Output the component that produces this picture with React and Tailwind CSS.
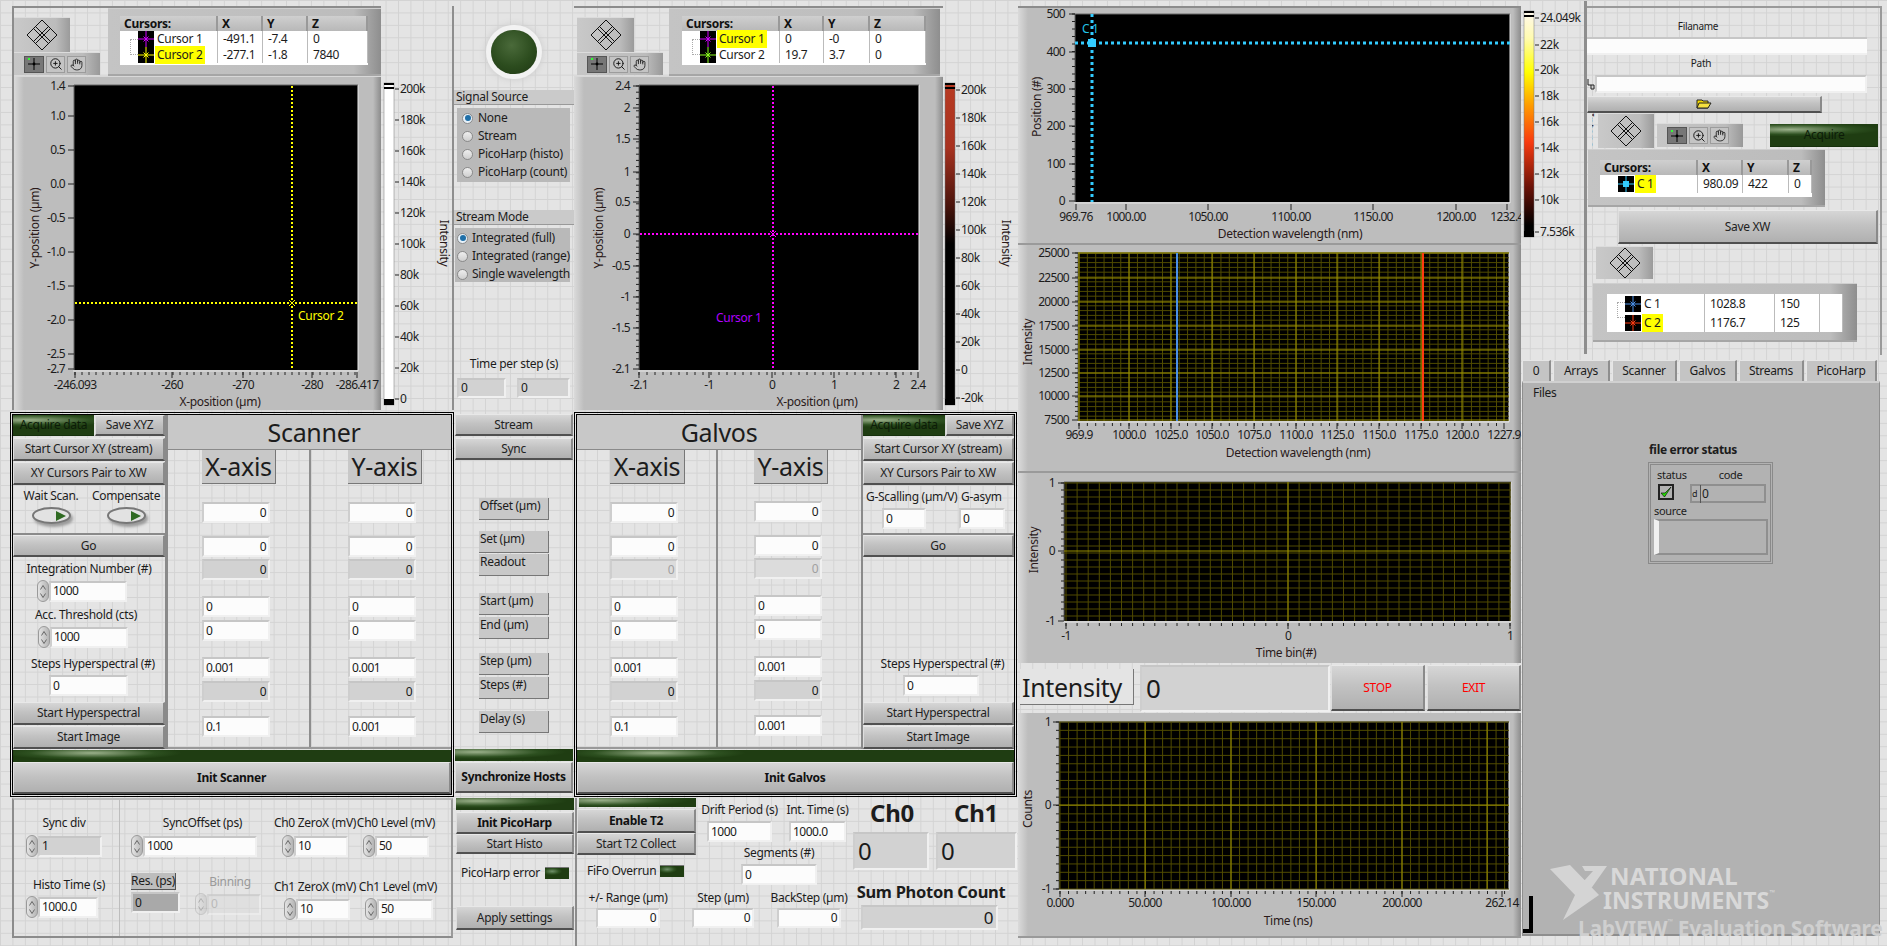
import React from "react";
import { ZoomIn, Hand } from "lucide-react";

const gridBg =
  "bg-[#e4e4e4] bg-[linear-gradient(#d3d3d3_1px,transparent_1px),linear-gradient(90deg,#d3d3d3_1px,transparent_1px)] bg-[size:12.45px_12.45px]";
const paneBg =
  "bg-[linear-gradient(90deg,#dadada,#bdbdbd_10px,#bdbdbd_calc(100%-8px),#8c8c8c)]";
const greenBar =
  "bg-[radial-gradient(ellipse_90px_7px_at_18%_25%,#9ab08a,#2d5020_70%,#1f3d12)]";

const range = (a, b, step) => {
  const out = [];
  for (let v = a; v <= b + 0.01; v += step) out.push(v);
  return out;
};

function Btn({ className = "", children, bold, red }) {
  return (
    <div
      className={`flex items-center justify-center whitespace-nowrap bg-[linear-gradient(#d6d6d6,#c2c2c2_45%,#b0b0b0)] border-t border-t-[#e8e8e8] border-l border-l-[#dedede] border-r-2 border-r-[#8a8a8a] border-b-2 border-b-[#505050] ${
        bold ? "font-bold text-[#111]" : "text-[#222]"
      } ${red ? "text-[#ff0000]" : ""} ${className}`}
    >
      {children}
    </div>
  );
}

function GreenBtn({ className = "", children }) {
  return (
    <div
      className={`flex items-center justify-center ${greenBar} border-b border-[#16300c] text-[#0c1c08] ${className}`}
    >
      {children}
    </div>
  );
}

function Field({ className = "", value, right, kind = "white" }) {
  const tone = {
    white: "bg-[#fcfcfc] text-[#1a1a1a]",
    gray: "bg-[#d2d2d2] text-[#1a1a1a]",
    dim: "bg-[#dcdcdc] text-[#a0a0a0]",
    dark: "bg-[#a9a9a9] text-[#1a1a1a]",
  }[kind];
  // default height only when the caller did not pass one
  const height = className.includes("h-[") ? "" : "h-[21px]";
  return (
    <div
      className={`flex items-center border-2 border-[#f0f0f0] border-t-[#c6c6c6] border-l-[#cecece] px-[2px] tracking-[-0.5px] ${height} ${tone} ${
        right ? "justify-end" : ""
      } ${className}`}
    >
      {value}
    </div>
  );
}

function SpinArrows({ dim }) {
  return (
    <div
      className={`flex h-[22px] w-[12px] shrink-0 flex-col items-center justify-center gap-[3px] rounded-full border border-[#9a9a9a] bg-[linear-gradient(90deg,#e4e4e4,#b4b4b4)] ${
        dim ? "opacity-40" : ""
      }`}
    >
      <svg width="6" height="5" viewBox="0 0 6 5">
        <path d="M3 0.5 L5.5 4.5 M3 0.5 L0.5 4.5" stroke="#666" fill="none" />
      </svg>
      <svg width="6" height="5" viewBox="0 0 6 5">
        <path d="M3 4.5 L5.5 0.5 M3 4.5 L0.5 0.5" stroke="#666" fill="none" />
      </svg>
    </div>
  );
}

function Spinner({ className = "", fieldClass = "", value, kind, dim }) {
  return (
    <div className={`flex items-center ${className}`}>
      <SpinArrows dim={dim} />
      <Field className={fieldClass} value={value} kind={kind} />
    </div>
  );
}

function Label({ className = "", children }) {
  return (
    <div className={`flex h-[16px] items-center justify-center whitespace-nowrap ${className}`}>
      {children}
    </div>
  );
}

function Diamond() {
  return (
    <svg width="32" height="32" viewBox="0 0 32 32">
      <path
        d="M16 1 L31 16 L16 31 L1 16 Z M7.5 9.5 L22.5 24.5 M9.5 7.5 L24.5 22.5 M22.5 7.5 L7.5 22.5 M24.5 9.5 L9.5 24.5"
        fill="none"
        stroke="#111"
      />
    </svg>
  );
}

function Palette({ className = "" }) {
  return (
    <div
      className={`flex items-center justify-center bg-[linear-gradient(90deg,#c9c9c9,#bcbcbc_75%,#9b9b9b)] border-t border-t-[#dcdcdc] ${className}`}
    >
      <Diamond />
    </div>
  );
}

function Tools({ className = "" }) {
  return (
    <div
      className={`flex items-center gap-[2px] pl-[10px] bg-[linear-gradient(90deg,#c6c6c6,#bcbcbc_80%,#999)] border-t border-t-[#dcdcdc] ${className}`}
    >
      <div className="flex h-[17px] w-[20px] items-center justify-center bg-[#777] border border-[#555]">
        <svg width="16" height="14" viewBox="0 0 16 14">
          <path d="M8 1 V13 M2 7 H14" stroke="#000" />
          <circle cx="8" cy="7" r="1.4" fill="#000" />
          <rect x="2" y="1" width="2" height="2" fill="#3f3" />
        </svg>
      </div>
      <div className="flex h-[17px] w-[19px] items-center justify-center bg-[#c4c4c4] border border-[#9c9c9c]">
        <ZoomIn size={14} color="#111" strokeWidth={1.6} />
      </div>
      <div className="flex h-[17px] w-[19px] items-center justify-center bg-[#c4c4c4] border border-[#9c9c9c]">
        <Hand size={13} color="#111" strokeWidth={1.5} />
      </div>
    </div>
  );
}

function CursorGlyph({ color, dot }) {
  return (
    <svg width="16" height="16" viewBox="0 0 16 16" className="shrink-0">
      <rect width="16" height="16" fill="#000" />
      <path d="M8 0 V16 M0 8 H16" stroke={color} />
      {dot ? (
        <rect x="5" y="5" width="6" height="6" fill={color} />
      ) : (
        <path d="M5.5 5.5 L10.5 10.5 M10.5 5.5 L5.5 10.5" stroke={color} />
      )}
    </svg>
  );
}

// cursor legend: frame + white table
function Legend({ className = "", tableClass = "", cols, header, rows, rowClass = "h-[16px]", glyphClass = "ml-[18px]" }) {
  return (
    <div
      className={`bg-[linear-gradient(90deg,#c4c4c4,#bcbcbc_90%,#8e8e8e)] border-t border-t-[#cfcfcf] border-b-2 border-b-[#a6a6a6] ${className}`}
    >
      <div className={`bg-white ${tableClass}`}>
        {header && (
          <div className="flex h-[15px] font-bold text-[#111]">
            {header.map((h, i) => (
              <div
                key={h}
                className={`flex items-center pl-[4px] bg-[linear-gradient(#cfcfcf,#b8b8b8)] border-r-2 border-r-[#999] ${cols[i]}`}
              >
                {h}
              </div>
            ))}
          </div>
        )}
        <div className="relative">
          {rows.length > 1 && (
            <div className="absolute left-[10px] top-[8px] h-[16px] w-[8px] border-l border-y border-dotted border-[#aaa]" />
          )}
          {rows.map((r) => (
            <div key={r.name} className={`flex items-center ${rowClass}`}>
              <div className={`flex h-full items-center border-r border-[#bbb] ${cols[0]}`}>
                <div className={`flex items-center gap-[1px] ${glyphClass}`}>
                  <CursorGlyph color={r.color} dot={r.dot} />
                  <span className={`px-[2px] ${r.active ? "bg-[#ffff00]" : ""}`}>{r.name}</span>
                </div>
              </div>
              {r.vals.map((v, i) => (
                <div
                  key={i}
                  className={`flex h-full items-center pl-[5px] tracking-[-0.4px] border-r border-[#bbb] ${cols[i + 1]}`}
                >
                  {v}
                </div>
              ))}
            </div>
          ))}
        </div>
      </div>
    </div>
  );
}

// axes and plot area, drawn in page coordinates through the viewBox
function Plot({
  vb,
  box,
  labelX,
  tickY,
  yTicks,
  xTicks,
  yMinor = [],
  xMinor = [],
  gridMajor,
  gridX = [],
  gridY = [],
  minorX = [],
  minorY = [],
  xTitle,
  yTitle,
  children,
}) {
  const [l, t, r, b] = box;
  return (
    <svg width={vb[2]} height={vb[3]} viewBox={vb.join(" ")} className="block">
      <rect x={l} y={t} width={r - l} height={b - t} fill="#000" />
      <path d={`M${l - 1} ${b + 1} H${r} V${t}`} stroke="#e8e8e8" fill="none" />
      <path d={`M${l} ${b} V${t} H${r}`} stroke="#666" fill="none" />
      {minorX.map((x) => (
        <line key={x} x1={x} x2={x} y1={t} y2={b} stroke="#504b00" />
      ))}
      {minorY.map((y) => (
        <line key={y} x1={l} x2={r} y1={y} y2={y} stroke="#504b00" />
      ))}
      {gridX.map((x) => (
        <line key={x} x1={x} x2={x} y1={t} y2={b} stroke={gridMajor} />
      ))}
      {gridY.map((y) => (
        <line key={y} x1={l} x2={r} y1={y} y2={y} stroke={gridMajor} />
      ))}
      {yMinor.map((y) => (
        <line key={y} x1={l - 3} x2={l} y1={y} y2={y} stroke="#222" />
      ))}
      {xMinor.map((x) => (
        <line key={x} x1={x} x2={x} y1={b + 2} y2={b + 5} stroke="#222" />
      ))}
      {yTicks.map(([label, y]) => (
        <g key={label}>
          <line x1={l - 6} x2={l} y1={y} y2={y} stroke="#222" />
          <text x={labelX} y={y + 4} textAnchor="end" fill="#1c1c1c" className="tracking-[-0.7px]">
            {label}
          </text>
        </g>
      ))}
      {xTicks.map(([label, x]) => (
        <g key={label}>
          <line x1={x} x2={x} y1={b + 2} y2={b + 8} stroke="#222" />
          <text x={x} y={tickY} textAnchor="middle" fill="#1c1c1c" className="tracking-[-0.7px]">
            {label}
          </text>
        </g>
      ))}
      <text x={xTitle[1]} y={xTitle[2]} textAnchor="middle" fill="#2a1a1a">
        {xTitle[0]}
      </text>
      <text
        x={yTitle[1]}
        y={yTitle[2]}
        textAnchor="middle"
        fill="#2a1a1a"
        transform={`rotate(-90 ${yTitle[1]} ${yTitle[2]})`}
      >
        {yTitle[0]}
      </text>
      {children}
    </svg>
  );
}

function Colorbar({ vb, bar, fill, ticks, title, children }) {
  const [x, w, t, b] = bar;
  return (
    <svg width={vb[2]} height={vb[3]} viewBox={vb.join(" ")} className="block">
      {children}
      <rect x={x} y={t} width={w} height={b - t} fill={fill} stroke="#777" strokeWidth="0.5" />
      <rect x={x} y={t} width={w} height="2" fill="#000" />
      <rect x={x} y={t + 4} width={w} height="2" fill="#000" />
      <rect x={x} y={b - 6} width={w} height="6" fill="#000" />
      {ticks.map(([label, y]) => (
        <g key={label}>
          <line x1={x + w + 1} x2={x + w + 5} y1={y} y2={y} stroke="#222" />
          <text x={x + w + 6} y={y + 4} fill="#1c1c1c" className="tracking-[-0.5px]">
            {label}
          </text>
        </g>
      ))}
      {title && (
        <text
          x={title[0]}
          y={title[1]}
          textAnchor="middle"
          fill="#2a1a1a"
          transform={`rotate(90 ${title[0]} ${title[1]})`}
        >
          Intensity
        </text>
      )}
    </svg>
  );
}

const axisTop = ["mt-[13px]", "mt-[2px]", "mt-[16px]", "mt-[3px]", "mt-[16px]", "mt-[3px]", "mt-[14px]"];

function AxisColumn({ className = "", title, boxClass, fieldClass, vals, topGap }) {
  return (
    <div className={`flex flex-col ${className}`}>
      <div
        className={`flex h-[34px] items-center justify-center bg-[#c8c8c8] border-r border-b border-[#777] text-[25px] leading-none ${boxClass}`}
      >
        {title}
      </div>
      {vals.map((v, i) => (
        <div key={i} className={i === 0 ? topGap : axisTop[i - 1]}>
          <Field className={fieldClass} value={v.v} right={v.right} kind={v.kind} />
        </div>
      ))}
    </div>
  );
}

const scannerVals = (y) => [
  { v: "0", right: true },
  { v: "0", right: true },
  { v: "0", right: true, kind: "gray" },
  { v: "0" },
  { v: "0" },
  { v: "0.001" },
  { v: "0", right: true, kind: "gray" },
  { v: y ? "0.001" : "0.1" },
];
const galvoVals = (y) => [
  { v: "0", right: true },
  { v: "0", right: true },
  { v: "0", right: true, kind: "dim" },
  { v: "0" },
  { v: "0" },
  { v: "0.001" },
  { v: "0", right: true, kind: "gray" },
  { v: y ? "0.001" : "0.1" },
];

function ScanColumn({ className = "", acquireClass, top, mid }) {
  return (
    <div className={`flex flex-col ${className}`}>
      <div className="flex h-[21px]">
        <GreenBtn className={acquireClass}>Acquire data</GreenBtn>
        <Btn className="flex-1 ml-[1px]">Save XYZ</Btn>
      </div>
      <Btn className="mt-[2px] h-[23px]">Start Cursor XY (stream)</Btn>
      <Btn className="mt-[1px] h-[23px]">XY Cursors Pair to XW</Btn>
      <div className="h-[50px] border-b-2 border-b-[#8a8a8a]">{top}</div>
      <Btn className="h-[22px]">Go</Btn>
      <div className="h-[145px]">{mid}</div>
      <Btn className="h-[23px]">Start Hyperspectral</Btn>
      <Btn className="mt-[1px] h-[23px]">Start Image</Btn>
    </div>
  );
}

function Toggle() {
  return (
    <div className="mt-[3px] flex h-[17px] w-[39px] items-center justify-end rounded-[50%] border-2 border-[#777] bg-[#e2e2e2] pr-[3px] shadow-[2px_3px_3px_#9a9a9a]">
      <svg width="10" height="10" viewBox="0 0 10 10">
        <path d="M0 0 L10 5 L0 10 Z" fill="#2f6a22" />
      </svg>
    </div>
  );
}

function Radio({ on }) {
  return (
    <div
      className={`flex h-[11px] w-[11px] shrink-0 items-center justify-center rounded-full border border-[#8a8a8a] ${
        on ? "bg-[#e8f2fa]" : "bg-[linear-gradient(#eeeeee,#cfcfcf)]"
      }`}
    >
      {on && <div className="h-[6px] w-[6px] rounded-full bg-[#1f6fa8]" />}
    </div>
  );
}

function RadioGroup({ className = "", items, gap }) {
  return (
    <div className={`flex flex-col pt-px bg-[#b9b9b9] ${className}`}>
      {items.map((t, i) => (
        <div key={t} className={`flex h-[18px] items-center whitespace-nowrap ${gap}`}>
          <Radio on={i === 0} />
          <span>{t}</span>
        </div>
      ))}
    </div>
  );
}

function LabelBox({ className = "", children }) {
  return (
    <div className={`h-[22px] w-[70px] ml-[24px] pl-[1px] leading-[16px] bg-[#c8c8c8] border-r border-b border-[#777] ${className}`}>
      {children}
    </div>
  );
}

function SmallLed({ className = "" }) {
  return (
    <div
      className={`h-[12px] w-[24px] border-t border-[#777] bg-[radial-gradient(ellipse_10px_4px_at_30%_30%,#70906a,#2d5020_70%,#1f3d12)] ${className}`}
    />
  );
}

function LabeledField({ className = "", label, value, fieldClass = "h-[20px]", right }) {
  return (
    <div className={`flex flex-col ${className}`}>
      <Label>{label}</Label>
      <Field className={`mt-[2px] ${fieldClass}`} value={value} right={right} />
    </div>
  );
}

const yTicks1 = [
  ["1.4", 86], ["1.0", 116], ["0.5", 150], ["0.0", 184], ["-0.5", 218],
  ["-1.0", 252], ["-1.5", 286], ["-2.0", 320], ["-2.5", 354], ["-2.7", 369],
];
const xTicks1 = [["-246.093", 75], ["-260", 172], ["-270", 243], ["-280", 312], ["-286.417", 357]];
const cb1 = ["200k", "180k", "160k", "140k", "120k", "100k", "80k", "60k", "40k", "20k", "0"].map((t, i) => [t, 89 + i * 31]);

const yTicks2 = [
  ["2.4", 86], ["2", 108], ["1.5", 139], ["1", 172], ["0.5", 202], ["0", 234],
  ["-0.5", 266], ["-1", 297], ["-1.5", 328], ["-2.1", 369],
];
const xTicks2 = [["-2.1", 639], ["-1", 709], ["0", 772], ["1", 834], ["2", 896], ["2.4", 918]];
const cb2 = ["200k", "180k", "160k", "140k", "120k", "100k", "80k", "60k", "40k", "20k", "0", "-20k"].map((t, i) => [t, 90 + i * 28]);

const cb3 = [["24.049k", 18], ["22k", 45], ["20k", 70], ["18k", 96], ["16k", 122], ["14k", 148], ["12k", 174], ["10k", 200], ["7.536k", 232]];

const yTicksA = [["500", 14], ["400", 52], ["300", 89], ["200", 126], ["100", 164], ["0", 201]];
const xTicksA = [["969.76", 1076], ["1000.00", 1126], ["1050.00", 1208], ["1100.00", 1291], ["1150.00", 1373], ["1200.00", 1456], ["1232.4", 1507]];
const yTicksB = [["25000", 253], ["22500", 278], ["20000", 302], ["17500", 326], ["15000", 350], ["12500", 373], ["10000", 396], ["7500", 420]];
const xTicksB = [["969.9", 1079], ["1000.0", 1129], ["1025.0", 1171], ["1050.0", 1212], ["1075.0", 1254], ["1100.0", 1296], ["1125.0", 1337], ["1150.0", 1379], ["1175.0", 1421], ["1200.0", 1462], ["1227.9", 1504]];

function Top1() {
  return (
    <div className="flex h-[68px]">
      <div className="w-[94px] pt-[9px]">
        <Palette className="h-[35px] w-[56px]" />
        <Tools className="h-[23px] w-[86px]" />
      </div>
      <Legend
        className="w-[273px] pl-[12px] pt-[7px]"
        tableClass="h-[49px] w-[248px]"
        cols={["w-[98px]", "w-[45px]", "w-[45px]", "w-[60px]"]}
        header={["Cursors:", "X", "Y", "Z"]}
        rows={[
          { name: "Cursor 1", color: "#d000ff", vals: ["-491.1", "-7.4", "0"] },
          { name: "Cursor 2", color: "#ffff00", active: true, vals: ["-277.1", "-1.8", "7840"] },
        ]}
      />
    </div>
  );
}

function Top2() {
  return (
    <div className="flex h-[68px]">
      <div className="w-[95px] pt-[9px] pl-[3px]">
        <Palette className="h-[35px] w-[57px]" />
        <Tools className="h-[23px] w-[86px]" />
      </div>
      <Legend
        className="w-[271px] pl-[13px] pt-[7px]"
        tableClass="h-[49px] w-[244px]"
        cols={["w-[98px]", "w-[44px]", "w-[46px]", "w-[56px]"]}
        header={["Cursors:", "X", "Y", "Z"]}
        rows={[
          { name: "Cursor 1", color: "#d000ff", active: true, vals: ["0", "-0", "0"] },
          { name: "Cursor 2", color: "#8cff20", vals: ["19.7", "3.7", "0"] },
        ]}
      />
    </div>
  );
}

function TopRow() {
  return (
    <div className="flex h-[410px]">
      <div className="ml-[12px] mt-[6px] flex h-[404px] w-[369px] flex-col border-t-2 border-l-2 border-[#8c8c8c]">
        <Top1 />
        <div className={`h-[334px] border-t border-[#d8d8d8] ${paneBg}`}>
          <Plot
            vb={[14, 77, 367, 333]}
            box={[74, 85, 358, 370]}
            labelX={65}
            tickY={389}
            yTicks={yTicks1}
            xTicks={xTicks1}
            xMinor={range(75, 357, 7)}
            xTitle={["X-position (µm)", 220, 406]}
            yTitle={["Y-position (µm)", 39, 228]}
          >
            <path d="M292 86 V370 M75 303 H358" stroke="#ffff00" strokeWidth="2" strokeDasharray="2 2" fill="none" />
            <path d="M289 300 L295 306 M295 300 L289 306" stroke="#ffff00" />
            <text x="298" y="320" fill="#ffff00">Cursor 2</text>
          </Plot>
        </div>
      </div>
      <Colorbar vb={[381, 0, 71, 410]} bar={[384, 10, 83, 405]} fill="#ffffff" ticks={cb1} title={[440, 243]} />
      <div className="h-[404px] w-[2px] mt-[6px] bg-[#8e8e8e]" />

      <div className="flex w-[120px] flex-col pt-[6px]">
        <div className="ml-[37px] mt-[24px] h-[44px] w-[46px] rounded-full bg-[radial-gradient(circle_at_45%_35%,#4a6a3a,#2c4c1e_55%,#1d3612)] shadow-[0_0_0_5px_#f2f2f2,0_0_6px_6px_#cfcfcf]" />
        <div className="mt-[16px] flex h-[15px] items-center pl-[2px] bg-[#cacaca] border-b border-[#999]">Signal Source</div>
        <RadioGroup
          className="ml-[3px] mt-[3px] h-[74px] w-[113px] pl-[5px]"
          gap="gap-[5px]"
          items={["None", "Stream", "PicoHarp (histo)", "PicoHarp (count)"]}
        />
        <div className="mt-[28px] flex h-[15px] items-center pl-[2px] bg-[#cacaca] border-b border-[#999]">Stream Mode</div>
        <RadioGroup
          className="ml-[1px] mt-[3px] h-[54px] w-[115px] pl-[2px]"
          gap="gap-[4px]"
          items={["Integrated (full)", "Integrated (range)", "Single wavelength"]}
        />
        <Label className="mt-[74px]">Time per step (s)</Label>
        <div className="mt-[6px] flex pl-[3px]">
          <Field className="h-[20px] w-[49px]" value="0" kind="gray" />
          <Field className="ml-[11px] h-[20px] w-[53px]" value="0" kind="gray" />
        </div>
      </div>

      <div className="mt-[6px] flex h-[404px] w-[369px] flex-col border-t-2 border-[#8c8c8c]">
        <Top2 />
        <div className={`h-[334px] border-t border-[#d8d8d8] ${paneBg}`}>
          <Plot
            vb={[574, 77, 369, 333]}
            box={[639, 85, 919, 370]}
            labelX={630}
            tickY={389}
            yTicks={yTicks2}
            xTicks={xTicks2}
            yMinor={range(86, 369, 6.2)}
            xMinor={range(639, 918, 8)}
            xTitle={["X-position (µm)", 817, 406]}
            yTitle={["Y-position (µm)", 603, 228]}
          >
            <path d="M773 86 V370 M640 234 H919" stroke="#ff00ff" strokeWidth="2" strokeDasharray="2 2" fill="none" />
            <path d="M770 231 L776 237 M776 231 L770 237" stroke="#ff00ff" />
            <text x="716" y="322" fill="#b000ff">Cursor 1</text>
          </Plot>
        </div>
      </div>
      <Colorbar vb={[943, 0, 75, 410]} bar={[945, 10, 83, 405]} fill="url(#cb2)" ticks={cb2} title={[1002, 243]}>
        <defs>
          <linearGradient id="cb2" x1="0" x2="0" y1="0" y2="1">
            <stop offset="0" stopColor="#b83a22" />
            <stop offset="0.2" stopColor="#a83220" />
            <stop offset="0.38" stopColor="#4a140c" />
            <stop offset="0.5" stopColor="#000" />
            <stop offset="1" stopColor="#000" />
          </linearGradient>
        </defs>
      </Colorbar>
    </div>
  );
}

function ScannerBox() {
  const top = (
    <div className="flex pt-[3px]">
      <div className="w-[76px] flex flex-col items-center">
        <Label>Wait Scan.</Label>
        <Toggle />
      </div>
      <div className="w-[72px] ml-[1px] flex flex-col items-center">
        <Label>Compensate</Label>
        <Toggle />
      </div>
    </div>
  );
  const mid = (
    <div className="flex flex-col pt-[4px]">
      <Label>Integration Number (#)</Label>
      <Spinner className="ml-[24px] mt-[3px]" fieldClass="w-[78px]" value="1000" />
      <Label className="mt-[5px] -ml-[6px]">Acc. Threshold (cts)</Label>
      <Spinner className="ml-[25px] mt-[3px]" fieldClass="w-[78px]" value="1000" />
      <Label className="mt-[8px] ml-[8px]">Steps Hyperspectral (#)</Label>
      <Field className="ml-[36px] mt-[3px] w-[79px]" value="0" />
    </div>
  );
  return (
    <div className="ml-[10px] mt-[2px] flex h-[385px] w-[444px] flex-col border-[3px] border-double border-black">
      <div className="flex h-[334px]">
        <ScanColumn className="w-[152px]" acquireClass="w-[81px]" top={top} mid={mid} />
        <div className="w-[3px] bg-[#8a8a8a]" />
        <div className="flex flex-1 flex-col">
          <div className="flex h-[35px] items-center justify-center bg-[#c8c8c8] border-b border-[#8a8a8a] pl-[9px] text-[25px] leading-none">
            Scanner
          </div>
          <div className="flex flex-1 border-b-2 border-[#999]">
            <AxisColumn
              className="w-[141px] pl-[34px]"
              title="X-axis"
              boxClass="w-[74px]"
              fieldClass="w-[68px]"
              topGap="mt-[18px]"
              vals={scannerVals(false)}
            />
            <div className="w-[2px] bg-[#8e8e8e]" />
            <AxisColumn
              className="flex-1 pl-[37px]"
              title="Y-axis"
              boxClass="w-[74px]"
              fieldClass="w-[68px]"
              topGap="mt-[18px]"
              vals={scannerVals(true)}
            />
          </div>
        </div>
      </div>
      <div className={`mt-[1px] h-[12px] ${greenBar}`} />
      <Btn bold className="h-[32px]">Init Scanner</Btn>
    </div>
  );
}

function MidHosts() {
  return (
    <div className="ml-[1px] flex w-[118px] flex-col pt-[4px]">
      <Btn className="h-[22px]">Stream</Btn>
      <Btn className="mt-[2px] h-[22px]">Sync</Btn>
      <LabelBox className="mt-[38px]">Offset (µm)</LabelBox>
      <LabelBox className="mt-[11px]">Set (µm)</LabelBox>
      <LabelBox className="mt-[1px]">Readout</LabelBox>
      <LabelBox className="mt-[17px]">Start (µm)</LabelBox>
      <LabelBox className="mt-[2px]">End (µm)</LabelBox>
      <LabelBox className="mt-[14px]">Step (µm)</LabelBox>
      <LabelBox className="mt-[2px]">Steps (#)</LabelBox>
      <LabelBox className="mt-[12px]">Delay (s)</LabelBox>
      <div className={`mt-[16px] h-[12px] ${greenBar}`} />
      <Btn bold className="mt-[1px] h-[31px]">Synchronize Hosts</Btn>
    </div>
  );
}

function GalvosBox() {
  const top = (
    <div className="flex flex-col pt-[4px]">
      <div className="flex">
        <Label className="ml-[3px] w-[95px] justify-start">G-Scalling (µm/V)</Label>
        <Label className="w-[50px] justify-start">G-asym</Label>
      </div>
      <div className="flex mt-[3px]">
        <Field className="ml-[19px] w-[44px]" value="0" />
        <Field className="ml-[33px] w-[46px]" value="0" />
      </div>
    </div>
  );
  const mid = (
    <div className="flex flex-col pt-[99px]">
      <Label className="ml-[8px]">Steps Hyperspectral (#)</Label>
      <Field className="ml-[40px] mt-[3px] w-[76px]" value="0" />
    </div>
  );
  return (
    <div className="ml-[1px] mt-[2px] flex h-[385px] w-[443px] flex-col border-[3px] border-double border-black">
      <div className="flex h-[334px]">
        <div className="flex w-[284px] flex-col">
          <div className="flex h-[35px] items-center justify-center bg-[#c8c8c8] border-b border-[#8a8a8a] text-[25px] leading-none">
            Galvos
          </div>
          <div className="flex flex-1 border-b-2 border-[#999]">
            <AxisColumn
              className="w-[139px] pl-[33px]"
              title="X-axis"
              boxClass="w-[75px]"
              fieldClass="w-[68px]"
              topGap="mt-[18px]"
              vals={galvoVals(false)}
            />
            <div className="w-[2px] bg-[#8e8e8e]" />
            <AxisColumn
              className="flex-1 pl-[36px]"
              title="Y-axis"
              boxClass="w-[74px]"
              fieldClass="w-[68px]"
              topGap="mt-[17px]"
              vals={galvoVals(true)}
            />
          </div>
        </div>
        <div className="w-[2px] bg-[#8a8a8a]" />
        <ScanColumn className="flex-1" acquireClass="w-[82px]" top={top} mid={mid} />
      </div>
      <div className={`mt-[1px] h-[12px] ${greenBar}`} />
      <Btn bold className="h-[32px]">Init Galvos</Btn>
    </div>
  );
}

function SettingsBlock() {
  return (
    <div className="ml-[12px] flex h-[140px] w-[441px] border-2 border-[#8c8c8c] border-t-[#bbb] border-r-[#9a9a9a]">
      <div className="w-[106px] border-r border-[#bdbdbd] pl-[12px] pt-[15px]">
        <Label className="w-[76px]">Sync div</Label>
        <Spinner className="mt-[4px]" fieldClass="w-[64px]" value="1" kind="gray" />
        <Label className="mt-[20px] w-[86px]">Histo Time (s)</Label>
        <Spinner className="mt-[3px]" fieldClass="w-[60px]" value="1000.0" />
      </div>
      <div className="w-[150px] pl-[11px] pt-[15px]">
        <Label className="w-[143px]">SyncOffset (ps)</Label>
        <Spinner className="mt-[4px]" fieldClass="w-[114px]" value="1000" />
        <div className="mt-[16px] flex">
          <div className="w-[64px]">
            <div className="flex h-[17px] w-[45px] items-center justify-center whitespace-nowrap bg-[#bdbdbd] border-r border-b border-[#555]">Res. (ps)</div>
            <Field className="mt-[2px] w-[49px]" value="0" kind="dark" />
          </div>
          <div className="w-[70px]">
            <Label className="text-[#9a9a9a] mt-[1px]">Binning</Label>
            <Spinner className="mt-[3px]" dim fieldClass="w-[54px] opacity-60" value="0" kind="dim" />
          </div>
        </div>
      </div>
      <div className="w-[90px] pl-[12px] pt-[15px] tracking-[-0.3px]">
        <Label className="w-[66px]">Ch0 ZeroX (mV)</Label>
        <Spinner className="mt-[4px]" fieldClass="w-[54px]" value="10" />
        <Label className="mt-[22px] w-[66px]">Ch1 ZeroX (mV)</Label>
        <Spinner className="ml-[2px] mt-[3px]" fieldClass="w-[54px]" value="10" />
      </div>
      <div className="flex-1 pl-[3px] pt-[15px] tracking-[-0.3px]">
        <Label className="w-[66px]">Ch0 Level (mV)</Label>
        <Spinner className="mt-[4px]" fieldClass="w-[54px]" value="50" />
        <Label className="mt-[22px] ml-[2px] w-[66px]">Ch1 Level (mV)</Label>
        <Spinner className="ml-[2px] mt-[3px]" fieldClass="w-[56px]" value="50" />
      </div>
    </div>
  );
}

function PicoColumn() {
  return (
    <div className="ml-[3px] flex w-[118px] flex-col">
      <div className={`h-[12px] ${greenBar}`} />
      <Btn bold className="mt-[2px] h-[22px]">Init PicoHarp</Btn>
      <Btn className="h-[20px]">Start Histo</Btn>
      <div className="mt-[12px] flex h-[14px] items-center pl-[5px] whitespace-nowrap">
        PicoHarp error
        <SmallLed className="ml-[5px]" />
      </div>
      <Btn className="mt-[26px] h-[24px]">Apply settings</Btn>
    </div>
  );
}

function T2Block() {
  return (
    <div className="ml-[1px] flex w-[443px] border-l-2 border-[#8c8c8c]">
      <div className="flex w-[277px] flex-col">
        <div className="flex h-[92px]">
          <div className="w-[119px]">
            <div className={`ml-[2px] h-[9px] w-[117px] ${greenBar}`} />
            <Btn bold className="mt-[2px] h-[24px]">Enable T2</Btn>
            <Btn className="h-[22px]">Start T2 Collect</Btn>
            <div className="mt-[9px] flex h-[14px] items-center pl-[10px] whitespace-nowrap">
              FiFo Overrun
              <SmallLed className="ml-[4px]" />
            </div>
          </div>
          <div className="ml-[11px] pt-[4px]">
            <div className="flex">
              <LabeledField className="w-[65px]" label="Drift Period (s)" value="1000" fieldClass="h-[21px] !mt-[3px]" />
              <LabeledField className="ml-[17px] w-[57px]" label="Int. Time (s)" value="1000.0" fieldClass="h-[21px] !mt-[3px]" />
            </div>
            <LabeledField className="ml-[34px] mt-[3px] w-[76px]" label="Segments (#)" value="0" fieldClass="h-[21px] !mt-[3px]" />
          </div>
        </div>
        <div className="flex pl-[19px]">
          <LabeledField className="w-[64px]" label="+/- Range (µm)" value="0" right />
          <LabeledField className="ml-[32px] w-[62px]" label="Step (µm)" value="0" right />
          <LabeledField className="ml-[23px] w-[64px]" label="BackStep (µm)" value="0" right />
        </div>
      </div>
      <div className="flex flex-1 flex-col">
        <div className="flex h-[34px] pb-[4px] font-bold text-[24px] leading-none">
          <div className="flex w-[78px] items-center justify-center">Ch0</div>
          <div className="ml-[3px] flex w-[84px] items-center justify-center">Ch1</div>
        </div>
        <div className="flex">
          <Field className="h-[38px] w-[76px] text-[24px] pl-[3px]" value="0" kind="gray" />
          <Field className="ml-[7px] h-[38px] w-[81px] text-[24px] pl-[3px]" value="0" kind="gray" />
        </div>
        <Label className="mt-[11px] h-[22px] w-[156px] font-bold text-[16.5px]">Sum Photon Count</Label>
        <Field className="ml-[8px] mt-[2px] h-[25px] w-[137px] pr-[3px] text-[17px]" value="0" kind="gray" right />
      </div>
    </div>
  );
}

function ChartColumn() {
  return (
    <div className="flex w-[503px] flex-col pt-[6px]">
      <div className={`h-[237px] border-t-2 border-[#8c8c8c] ${paneBg}`}>
        <Plot
          vb={[1018, 8, 503, 235]}
          box={[1075, 14, 1510, 202]}
          labelX={1065}
          tickY={221}
          yTicks={yTicksA}
          xTicks={xTicksA}
          yMinor={range(14, 201, 7.5)}
          xTitle={["Detection wavelength (nm)", 1290, 238]}
          yTitle={["Position (#)", 1041, 107]}
        >
          <path d="M1092 14 V202 M1075 43 H1510" stroke="#33ccff" strokeWidth="3" strokeDasharray="3 3" fill="none" />
          <rect x="1088" y="39" width="8" height="8" fill="#33ccff" />
          <text x="1082" y="33" fill="#22c4e8">C 1</text>
        </Plot>
      </div>
      <div className={`h-[228px] border-t-2 border-[#9a9a9a] ${paneBg}`}>
        <Plot
          vb={[1018, 245, 503, 226]}
          box={[1078, 253, 1509, 421]}
          labelX={1069}
          tickY={439}
          yTicks={yTicksB}
          xTicks={xTicksB}
          yMinor={range(253, 420, 4.8)}
          xMinor={range(1079, 1504, 8.35)}
          gridMajor="#9a9000"
          gridX={xTicksB.map((t) => t[1])}
          gridY={yTicksB.map((t) => t[1])}
          minorX={range(1079, 1504, 8.35)}
          minorY={range(253, 420, 4.8)}
          xTitle={["Detection wavelength (nm)", 1298, 457]}
          yTitle={["Intensity", 1032, 342]}
        >
          <line x1="1177" x2="1177" y1="253" y2="421" stroke="#4a90e8" strokeWidth="2" />
          <line x1="1423" x2="1423" y1="253" y2="421" stroke="#ff3a10" strokeWidth="2" />
        </Plot>
      </div>
      <div className={`h-[192px] border-t-2 border-[#9a9a9a] ${paneBg}`}>
        <Plot
          vb={[1018, 473, 503, 190]}
          box={[1064, 482, 1511, 621]}
          labelX={1055}
          tickY={640}
          yTicks={[["1", 483], ["0", 551], ["-1", 621]]}
          xTicks={[["-1", 1066], ["0", 1288], ["1", 1510]]}
          yMinor={range(483, 621, 7)}
          xMinor={range(1066, 1510, 11.1)}
          gridMajor="#9a9000"
          gridX={[1288]}
          gridY={[551]}
          minorX={range(1066, 1510, 11.1)}
          minorY={range(483, 621, 7)}
          xTitle={["Time bin(#)", 1286, 657]}
          yTitle={["Intensity", 1038, 550]}
        />
      </div>
      <div className="flex h-[50px] items-start pt-[2px]">
        <div className="mt-[4px] ml-[2px] flex h-[36px] w-[114px] items-center pl-[2px] pt-[2px] text-[25px] leading-none bg-[#e4e4e4] border-r border-b border-[#777]">
          Intensity
        </div>
        <Field className="ml-[6px] h-[47px] w-[190px] pl-[4px] text-[26px] border-[#efefef]" value="0" kind="gray" />
        <Btn red className="ml-[1px] h-[46px] w-[94px]">STOP</Btn>
        <Btn red className="ml-[2px] h-[46px] w-[94px]">EXIT</Btn>
      </div>
      <div className={`h-[225px] border-b-2 border-[#9a9a9a] ${paneBg}`}>
        <Plot
          vb={[1018, 713, 503, 223]}
          box={[1059, 722, 1509, 889]}
          labelX={1051}
          tickY={907}
          yTicks={[["1", 722], ["0", 805], ["-1", 889]]}
          xTicks={[["0.000", 1060], ["50.000", 1145], ["100.000", 1231], ["150.000", 1316], ["200.000", 1402], ["262.14", 1502]]}
          yMinor={range(722, 889, 8.35)}
          xMinor={range(1060, 1508, 8.55)}
          gridMajor="#9a9000"
          gridX={[1145, 1231, 1316, 1402, 1487]}
          gridY={[805]}
          minorX={range(1060, 1508, 8.55)}
          minorY={range(722, 889, 8.35)}
          xTitle={["Time (ns)", 1288, 925]}
          yTitle={["Counts", 1032, 809]}
        />
      </div>
    </div>
  );
}

const tabs = [
  ["0", "w-[29px]"],
  ["Arrays", "w-[57px]"],
  ["Scanner", "w-[65px]"],
  ["Galvos", "w-[58px]"],
  ["Streams", "w-[65px]"],
  ["PicoHarp", "w-[71px]"],
];

function RightPanel() {
  return (
    <div className="flex w-[366px] flex-col">
      <div className="flex h-[355px]">
        <Colorbar vb={[1521, 0, 63, 355]} bar={[1524, 10, 11, 237]} fill="url(#cb3)" ticks={cb3}>
          <defs>
            <linearGradient id="cb3" x1="0" x2="0" y1="0" y2="1">
              <stop offset="0" stopColor="#fff8ee" />
              <stop offset="0.12" stopColor="#fffbb0" />
              <stop offset="0.27" stopColor="#ffff00" />
              <stop offset="0.42" stopColor="#ff9a00" />
              <stop offset="0.58" stopColor="#f83a10" />
              <stop offset="0.78" stopColor="#6a1208" />
              <stop offset="0.95" stopColor="#000" />
            </linearGradient>
          </defs>
        </Colorbar>
        <div className="mt-[1px] h-[353px] w-[3px] bg-[#8e8e8e]" />
        <div className="mt-[6px] flex h-[349px] w-[295px] flex-col border-t-2 border-r-2 border-[#9a9a9a]">
          <div className="mt-[10px] flex h-[16px] w-[222px] items-center justify-center text-[10px]">Filaname</div>
          <Field className="mt-[3px] h-[18px] w-[280px] border-x-0" value="" />
          <div className="flex h-[16px] w-[228px] items-center justify-center text-[10px]">Path</div>
          <div className="mt-[4px] flex items-center">
            <svg width="8" height="11" viewBox="0 0 8 11" className="shrink-0">
              <path d="M1 0 V6 H4 V10 H7 V6 H4" fill="none" stroke="#222" />
            </svg>
            <Field className="h-[18px] w-[272px]" value="" />
          </div>
          <Btn className="mt-[3px] h-[17px] w-[235px]">
            <svg width="16" height="10" viewBox="0 0 16 10">
              <path d="M1 1 H6 L7 2 H12 V9 H1 Z" fill="#f4d800" stroke="#222" />
              <path d="M3 4 H15 L12 9 H1 Z" fill="#f4e040" stroke="#222" />
            </svg>
          </Btn>
          <div className="flex h-[35px]">
            <div className="ml-[5px] w-[6px] overflow-hidden">
              <div className="w-[35px] origin-top-left translate-x-[6px] rotate-90 text-[#3a1a1a]">Intensity</div>
            </div>
            <Palette className="h-[35px] w-[56px]" />
            <Tools className="ml-[3px] mt-[10px] h-[24px] w-[86px]" />
            <GreenBtn className="ml-[27px] mt-[11px] h-[23px] w-[108px]">Acquire</GreenBtn>
          </div>
          <Legend
            className="ml-[1px] mt-[1px] h-[58px] w-[237px] pl-[12px] pt-[10px]"
            tableClass="h-[37px] w-[212px]"
            cols={["w-[98px]", "w-[45px]", "w-[46px]", "w-[23px]"]}
            header={["Cursors:", "X", "Y", "Z"]}
            rows={[{ name: "C 1", color: "#33ccff", dot: true, active: true, vals: ["980.09", "422", "0"] }]}
            rowClass="h-[18px]"
          />
          <Btn className="ml-[31px] mt-[3px] h-[34px] w-[260px]">Save XW</Btn>
          <Palette className="ml-[9px] mt-[2px] h-[33px] w-[57px]" />
          <Legend
            className="ml-[6px] mt-[4px] h-[59px] w-[264px] pl-[14px] pt-[10px]"
            tableClass="h-[38px] w-[236px]"
            cols={["w-[98px]", "w-[70px]", "w-[45px]", "w-[23px]"]}
            rows={[
              { name: "C 1", color: "#4a90e8", vals: ["1028.8", "150", ""] },
              { name: "C 2", color: "#ff3a10", active: true, vals: ["1176.7", "125", ""] },
            ]}
            rowClass="h-[19px]"
          />
        </div>
      </div>

      <div className="ml-[1px] mt-[5px] flex h-[21px] gap-[2px]">
        {tabs.map(([t, w]) => (
          <div
            key={t}
            className={`flex items-center justify-center bg-[#c4c4c4] border-t border-l border-[#e6e6e6] border-r-2 border-r-[#8e8e8e] ${w}`}
          >
            {t}
          </div>
        ))}
      </div>
      <div className="relative ml-[1px] h-[555px] w-[358px] bg-[#b2b2b2] border-t-2 border-t-[#d0d0d0] border-x border-[#8e8e8e] border-b-2">
        <div className="pl-[10px] pt-[1px]">Files</div>
        <div className="ml-[126px] mt-[39px] font-bold">file error status</div>
        <div className="ml-[125px] mt-[3px] h-[102px] w-[125px] border-[3px] border-double border-[#8a8a8a] p-[3px]">
          <div className="flex h-[14px] items-center text-[11px]">
            <span className="ml-[3px]">status</span>
            <span className="ml-[32px]">code</span>
          </div>
          <div className="mt-[2px] flex">
            <div className="ml-[4px] flex h-[16px] w-[16px] items-center justify-center border-2 border-[#222]">
              <svg width="12" height="12" viewBox="0 0 12 12">
                <path d="M1 7 L4.5 11 L11 1 L5 7 Z" fill="#22e000" stroke="#111" strokeWidth="0.7" />
              </svg>
            </div>
            <div className="ml-[16px] flex h-[19px] w-[76px] items-center border-2 border-[#8f8f8f]">
              <span className="w-[8px] text-[9px] leading-none">d</span>
              <span className="border-l border-[#555] pl-[1px]">0</span>
            </div>
          </div>
          <div className="mt-[1px] flex h-[14px] items-center text-[11px]">source</div>
          <div className="mt-[1px] h-[36px] w-[114px] border-2 border-[#8f8f8f] border-l-[5px] border-l-[#f0f0f0]" />
        </div>
        <div className="absolute left-[6px] top-[513px] h-[36px] w-[4px] bg-black" />
        <div className="absolute left-0 top-[546px] h-[4px] w-[10px] bg-black" />
      </div>
    </div>
  );
}

function Watermark() {
  return (
    <div className="absolute left-[1550px] top-[865px] h-[78px] w-[336px] text-[#d8d8d8]">
      <svg width="60" height="60" viewBox="0 0 60 60" className="absolute left-0 top-0">
        <path d="M0 4 L20 0 L49 30 L13 55 L25 30 Z M32 1 H57 L40 25 L33 17 L43 6 H35 Z" fill="#d4d4d4" />
      </svg>
      <div className="absolute left-[60px] top-[-1px] whitespace-nowrap text-[24px] font-bold leading-none tracking-[0.2px]">
        NATIONAL
      </div>
      <div className="absolute left-[53px] top-[24px] whitespace-nowrap text-[23px] font-bold leading-none tracking-[0.1px]">
        INSTRUMENTS
        <span className="align-top text-[7px] font-normal">™</span>
      </div>
      <div className="absolute left-[28px] top-[53px] whitespace-nowrap text-[21px] font-bold leading-none tracking-[-0.3px] text-[#cfcfcf]">
        LabVIEW<span className="align-top text-[7px]">™</span> Evaluation Software
      </div>
    </div>
  );
}

export default function App() {
  return (
    <div className={`relative flex h-[946px] w-[1887px] overflow-hidden font-['Noto_Sans'] text-[12px] tracking-[-0.3px] text-[#1c1c1c] ${gridBg}`}>
      <div className="flex w-[1018px] flex-col">
        <TopRow />
        <div className="flex h-[388px]">
          <ScannerBox />
          <MidHosts />
          <GalvosBox />
        </div>
        <div className="flex h-[148px]">
          <SettingsBlock />
          <PicoColumn />
          <T2Block />
        </div>
      </div>
      <ChartColumn />
      <RightPanel />
      <Watermark />
    </div>
  );
}
